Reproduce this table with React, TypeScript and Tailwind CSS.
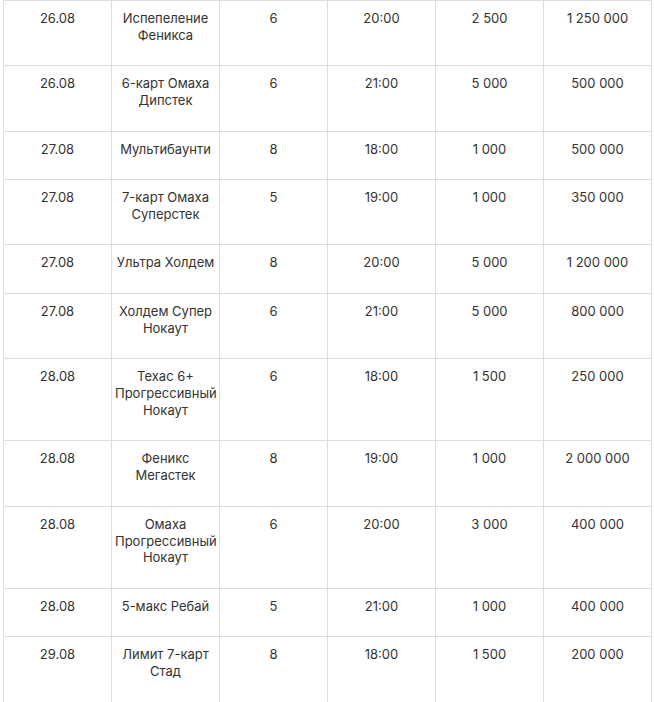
import React from "react";

const rows: [string, string, string, string, string, string][] = [
  ["26.08", "Испепеление Феникса", "6", "20:00", "2 500", "1 250 000"],
  ["26.08", "6-карт Омаха Дипстек", "6", "21:00", "5 000", "500 000"],
  ["27.08", "Мультибаунти", "8", "18:00", "1 000", "500 000"],
  ["27.08", "7-карт Омаха Суперстек", "5", "19:00", "1 000", "350 000"],
  ["27.08", "Ультра Холдем", "8", "20:00", "5 000", "1 200 000"],
  ["27.08", "Холдем Супер Нокаут", "6", "21:00", "5 000", "800 000"],
  ["28.08", "Техас 6+ Прогрессивный Нокаут", "6", "18:00", "1 500", "250 000"],
  ["28.08", "Феникс Мегастек", "8", "19:00", "1 000", "2 000 000"],
  ["28.08", "Омаха Прогрессивный Нокаут", "6", "20:00", "3 000", "400 000"],
  ["28.08", "5-макс Ребай", "5", "21:00", "1 000", "400 000"],
  ["29.08", "Лимит 7-карт Стад", "8", "18:00", "1 500", "200 000"],
];

export default function App() {
  return (
    <div className="w-[654px] h-[702px] overflow-hidden bg-white">
      <table
        className="ml-[3px] w-[649px] table-fixed border-collapse text-[13px] leading-[16.9px] text-[#333]"
        style={{ fontFamily: "Inter, 'Noto Sans', sans-serif" }}
      >
        <tbody>
          {rows.map((r, i) => (
            <tr key={i}>
              {r.map((c, j) => (
                <td
                  key={j}
                  className="border border-[#dddddd] pt-[9px] pb-[21.5px] px-[3px] text-center align-top"
                >
                  {c}
                </td>
              ))}
            </tr>
          ))}
        </tbody>
      </table>
    </div>
  );
}
